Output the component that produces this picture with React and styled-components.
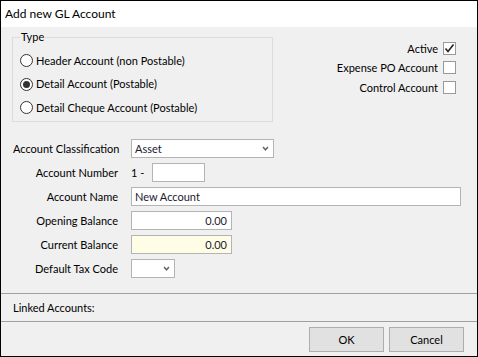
import React from "react";
import styled, { createGlobalStyle } from "styled-components";

const GlobalStyle = createGlobalStyle`
  html, body {
    margin: 0;
    padding: 0;
    background: #fff;
  }
  body {
    font-family: Lato, "Noto Sans", sans-serif;
    font-size: 11px;
    line-height: 16px;
    color: #000;
  }
`;

const Window = styled.div`
  width: 478px;
  height: 357px;
  box-sizing: border-box;
  border: 1px solid #000;
  display: flex;
  flex-direction: column;
  background: #f0f0f0;
`;

const TitleBar = styled.div`
  height: 26px;
  background: #fff;
  display: flex;
  align-items: center;
  padding-left: 4px;
  font-size: 12px;
  flex-shrink: 0;
`;

const Body = styled.div`
  flex: 1;
  display: flex;
  flex-direction: column;
`;

const TopArea = styled.div`
  display: flex;
  justify-content: space-between;
  padding: 10px 21px 0 11px;
`;

const GroupBox = styled.fieldset`
  width: 261px;
  height: 85px;
  box-sizing: border-box;
  margin: 0;
  padding: 11px 0 0 7px;
  border: 1px solid #dcdcdc;
  display: flex;
  flex-direction: column;
  position: relative;
`;

const Legend = styled.span`
  position: absolute;
  top: -9px;
  left: 7px;
  padding: 0 1px;
  background: #f0f0f0;
`;

const RadioRow = styled.label`
  display: flex;
  align-items: center;
  height: 23.5px;
  gap: 3px;
`;

const RadioDot = styled.span`
  width: 13px;
  height: 13px;
  box-sizing: border-box;
  border-radius: 50%;
  border: 1px solid #333;
  background: #fff;
  display: flex;
  align-items: center;
  justify-content: center;
  &::after {
    content: "";
    width: 7px;
    height: 7px;
    border-radius: 50%;
    background: ${p => (p.checked ? "#333" : "transparent")};
  }
`;

const Flags = styled.div`
  display: flex;
  flex-direction: column;
  align-items: flex-end;
  padding-top: 5px;
  gap: 6px;
`;

const FlagRow = styled.label`
  display: flex;
  align-items: center;
  gap: 5px;
  height: 13px;
  &:nth-child(3) {
    margin-top: 1px;
  }
`;

const Box = styled.span`
  width: 13px;
  height: 13px;
  box-sizing: border-box;
  border: 1px solid #999;
  background: #fff;
  display: flex;
  align-items: center;
  justify-content: center;
`;

const Form = styled.div`
  display: grid;
  grid-template-columns: 105px 1fr;
  column-gap: 13px;
  row-gap: 5px;
  padding: 17px 16px 0 12px;
  align-items: center;
`;

const Label = styled.div`
  text-align: right;
  white-space: nowrap;
`;

const Field = styled.div`
  display: flex;
  align-items: center;
  gap: 8px;
  height: 19px;
`;

const Input = styled.div`
  width: ${p => p.w || "100%"};
  height: 19px;
  box-sizing: border-box;
  border: 1px solid #b4b4b4;
  background: ${p => (p.yellow ? "#fffde5" : "#fff")};
  display: flex;
  align-items: center;
  justify-content: ${p => (p.right ? "flex-end" : "space-between")};
  padding: 0 4px 0 3px;
  color: #1a1a2e;
`;

const Linked = styled.div`
  margin-top: 15px;
  border-top: 1px solid #a0a0a0;
  border-bottom: 1px solid #a0a0a0;
  height: 29px;
  box-sizing: border-box;
  display: flex;
  align-items: center;
  padding-left: 12px;
`;

const Footer = styled.div`
  display: flex;
  justify-content: flex-end;
  gap: 5px;
  padding: 5px 13px 0 0;
`;

const Button = styled.button`
  width: 75px;
  height: 25px;
  box-sizing: border-box;
  border: 1px solid #adadad;
  background: #e1e1e1;
  font: inherit;
  color: #000;
  padding: 0;
`;

const Check = () => (
  <svg width="11" height="11" viewBox="0 0 11 11">
    <path d="M1.5 5.5 L4 8.5 L9.5 1.5" fill="none" stroke="#222" strokeWidth="1.6" />
  </svg>
);

const Chevron = () => (
  <svg width="7" height="5" viewBox="0 0 7 5">
    <path d="M1 1 L3.5 3.8 L6 1" fill="none" stroke="#666" strokeWidth="1.5" />
  </svg>
);

export default function App() {
  return (
    <>
      <GlobalStyle />
      <Window>
        <TitleBar>Add new GL Account</TitleBar>
        <Body>
          <TopArea>
            <GroupBox>
              <Legend>Type</Legend>
              <RadioRow>
                <RadioDot />
                Header Account (non Postable)
              </RadioRow>
              <RadioRow>
                <RadioDot checked />
                Detail Account (Postable)
              </RadioRow>
              <RadioRow>
                <RadioDot />
                Detail Cheque Account (Postable)
              </RadioRow>
            </GroupBox>
            <Flags>
              <FlagRow>
                Active
                <Box>
                  <Check />
                </Box>
              </FlagRow>
              <FlagRow>
                Expense PO Account
                <Box />
              </FlagRow>
              <FlagRow>
                Control Account
                <Box />
              </FlagRow>
            </Flags>
          </TopArea>

          <Form>
            <Label>Account Classification</Label>
            <Field>
              <Input w="143px">
                Asset
                <Chevron />
              </Input>
            </Field>

            <Label>Account Number</Label>
            <Field>
              1 -
              <Input w="53px" />
            </Field>

            <Label>Account Name</Label>
            <Field>
              <Input>New Account</Input>
            </Field>

            <Label>Opening Balance</Label>
            <Field>
              <Input w="101px" right>
                0.00
              </Input>
            </Field>

            <Label>Current Balance</Label>
            <Field>
              <Input w="101px" right yellow>
                0.00
              </Input>
            </Field>

            <Label>Default Tax Code</Label>
            <Field>
              <Input w="44px" right>
                <Chevron />
              </Input>
            </Field>
          </Form>

          <Linked>Linked Accounts:</Linked>

          <Footer>
            <Button>OK</Button>
            <Button>Cancel</Button>
          </Footer>
        </Body>
      </Window>
    </>
  );
}
